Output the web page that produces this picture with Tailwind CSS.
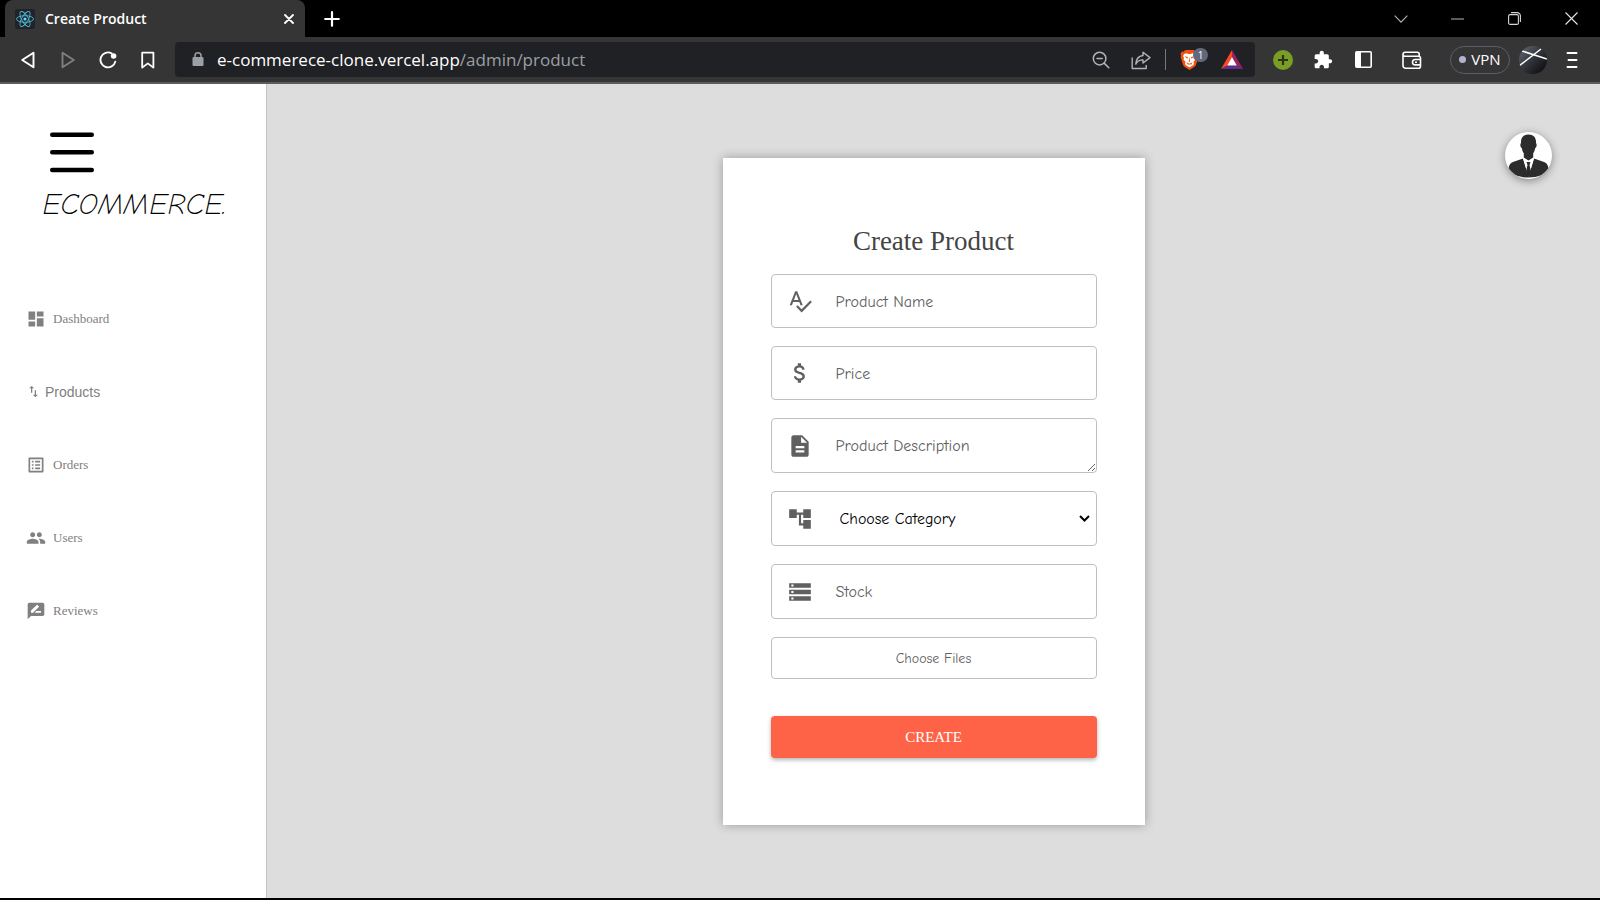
<!DOCTYPE html>
<html lang="en">
<head>
<meta charset="utf-8">
<meta name="viewport" content="width=device-width, initial-scale=1">
<title>Create Product</title>
<script src="https://cdn.jsdelivr.net/npm/@tailwindcss/browser@4"></script>
</head>
<body class="flex min-h-screen flex-col bg-black font-['Segoe_UI','Open_Sans',sans-serif]">

<!-- Browser window -->
<header>
  <div class="flex h-[37px] items-stretch bg-black text-white">
    <div class="ml-[5px] flex w-[300px] items-center rounded-t-lg bg-[#353535] pl-[10px] pr-2">
      <svg class="size-5 rounded-xs bg-[#20232a]" viewBox="0 0 20 20" fill="none" stroke="#4fb8d2" stroke-width="0.9" aria-hidden="true">
        <ellipse cx="10" cy="10" rx="8.5" ry="3.3"/>
        <ellipse cx="10" cy="10" rx="8.5" ry="3.3" transform="rotate(60 10 10)"/>
        <ellipse cx="10" cy="10" rx="8.5" ry="3.3" transform="rotate(120 10 10)"/>
        <circle cx="10" cy="10" r="1.6" fill="#61dafb" stroke="none"/>
      </svg>
      <span class="ml-[10px] flex-1 text-sm font-semibold">Create Product</span>
      <button type="button" class="flex size-4 items-center justify-center" aria-label="Close tab">
        <svg class="size-[10px]" viewBox="0 0 10 10" stroke="#fff" stroke-width="1.8" stroke-linecap="round"><path d="M1 1l8 8M9 1l-8 8"/></svg>
      </button>
    </div>
    <button type="button" class="ml-3 flex w-[30px] items-center justify-center" aria-label="New tab">
      <svg class="size-4" viewBox="0 0 16 16" stroke="#fff" stroke-width="2.2" stroke-linecap="round"><path d="M8 1.2v13.6M1.2 8h13.6"/></svg>
    </button>
    <div class="ml-auto flex">
      <button type="button" class="flex w-[57px] items-center justify-center" aria-label="Search tabs">
        <svg class="h-2 w-[14px]" viewBox="0 0 14 8" fill="none" stroke="#b5b5b5" stroke-width="1.1"><path d="M.7.7L7 7.2 13.3.7"/></svg>
      </button>
      <button type="button" class="flex w-[57px] items-center justify-center" aria-label="Minimize">
        <svg class="h-[2px] w-[13px]" viewBox="0 0 13 2" stroke="#b5b5b5"><path d="M0 1h13"/></svg>
      </button>
      <button type="button" class="flex w-[57px] items-center justify-center" aria-label="Restore">
        <svg class="size-[13px]" viewBox="0 0 13 13" fill="none" stroke="#d5d5d5" stroke-width="1.1"><rect x=".6" y="2.6" width="9.8" height="9.8" rx="1.5"/><path d="M3 .6h6.2a3.2 3.2 0 0 1 3.2 3.2V10"/></svg>
      </button>
      <button type="button" class="flex w-[57px] items-center justify-center" aria-label="Close window">
        <svg class="size-[13px]" viewBox="0 0 13 13" stroke="#e5e5e5" stroke-width="1.1"><path d="M.5.5l12 12M12.5.5l-12 12"/></svg>
      </button>
    </div>
  </div>

  <div class="flex h-[47px] items-center border-b-2 border-[#5c5c5c] bg-[#353535] pl-2 pr-[13px]">
    <button type="button" class="flex w-10 justify-center" aria-label="Back">
      <svg class="size-[18px]" viewBox="0 0 18 18" fill="none" stroke="#fff" stroke-width="1.9" stroke-linejoin="round"><path d="M14.5 1.8v14.4L3.2 9z"/></svg>
    </button>
    <button type="button" class="flex w-10 justify-center" aria-label="Forward">
      <svg class="size-[18px]" viewBox="0 0 18 18" fill="none" stroke="#7f7f7f" stroke-width="1.9" stroke-linejoin="round"><path d="M3.5 1.8v14.4L14.8 9z"/></svg>
    </button>
    <button type="button" class="flex w-10 justify-center" aria-label="Reload">
      <svg class="size-[18px]" viewBox="0 0 18 18" fill="none" stroke="#fff" stroke-width="1.9" stroke-linecap="round"><path d="M12.6 2.3A7.5 7.5 0 1 0 16.3 10.6"/><circle cx="14.6" cy="5" r="2.8" fill="#fff" stroke="none"/></svg>
    </button>
    <button type="button" class="flex w-10 justify-center" aria-label="Bookmark">
      <svg class="size-[18px]" viewBox="0 0 18 18" fill="none" stroke="#fff" stroke-width="1.8" stroke-linejoin="round"><path d="M3.2 1.6h11.2v15L8.8 12.4l-5.6 4.2z"/></svg>
    </button>

    <div class="ml-[7px] flex h-[35px] flex-1 items-center rounded bg-[#202124] pl-[17px] pr-3">
      <svg class="h-[15px] w-3" viewBox="0 0 12 15" aria-hidden="true"><rect x=".5" y="5" width="11" height="9" rx="1" fill="#9aa0a6"/><path d="M3 6V3.8a3 3 0 0 1 6 0V6" fill="none" stroke="#9aa0a6" stroke-width="1.5"/></svg>
      <a href="#" class="ml-[13px] flex-1 text-[17px] leading-6 text-white">e-commerece-clone.vercel.app<span class="text-[#9aa0a6]">/admin/product</span></a>
      <button type="button" class="flex w-5 justify-center" aria-label="Zoom out">
        <svg class="size-[18px]" viewBox="0 0 18 18" fill="none" stroke="#b0b3b8" stroke-width="1.5" stroke-linecap="round"><circle cx="7.6" cy="7.6" r="6.3"/><path d="M12.4 12.4l4.4 4.4M5 7.6h5.2"/></svg>
      </button>
      <button type="button" class="ml-5 flex w-5 justify-center" aria-label="Share">
        <svg class="size-5" viewBox="0 0 20 20" fill="none" stroke="#b0b3b8" stroke-width="1.4" stroke-linejoin="round"><path d="M1.2 7.5v11h14V15"/><path d="M12 2.2l7 5.4-7 5.4V9.9c-3.6-.2-5.8 1.4-7.2 4.2.2-4.8 2.6-8 7.2-8.6z"/></svg>
      </button>
      <span class="ml-[14px] h-[21px] w-px bg-[#77797d]"></span>
      <button type="button" class="relative ml-[14px] h-[24px] w-[28px]" aria-label="Brave Shields, 1 blocked">
        <svg class="h-[22px] w-[19px]" viewBox="0 0 19 24" preserveAspectRatio="none">
          <path d="M5.2 1h8.6l1.6 2 1.6-.2L18.6 5.2l-.6 2 .4 1.6-2.400 8.400c-.4 1.200-.9 1.800-1.800 2.500L9.500 23l-4.700-3.300C3.900 19 3.400 18.400 3 17.200L.6 8.800 1 7.200l-.6-2L2 2.800l1.600.2z" fill="#f2520f"/>
          <path d="M4 5.500l3-1 1 1h3l1-1 3 1 1 2.500-1 1.500.5 2-2 2.500.5 2.500-2 2-2.500 1.500L7 18.500l-2-2 .5-2.500-2-2.500.5-2L3 8z" fill="#fff"/>
          <path d="M4.500 8l3.500.8-.6 1.700zM14.500 8l-3.500.8.6 1.700zM9.500 8.500l.7 5.500H8.800zM6.500 14.500l3 1.600 3-1.600-1 2.500h-4z" fill="#f2520f"/>
        </svg>
        <span class="absolute right-0 top-0 flex h-[14px] w-[15px] items-center justify-center rounded-full bg-[#62677b] text-[10px] leading-none text-white">1</span>
      </button>
      <button type="button" class="ml-[13px]" aria-label="Rewards">
        <svg class="h-[20px] w-[22px]" viewBox="0 0 22 20"><path d="M11 0L0 19l6.500-3.600L11 7z" fill="#ff4724"/><path d="M11 0l11 19-6.500-3.600L11 7z" fill="#9e1f63"/><path d="M0 19h22l-6.500-3.600h-9z" fill="#662d91"/><path d="M11 7l4.800 8.500H6.200z" fill="#fff"/></svg>
      </button>
    </div>

    <button type="button" class="ml-2 flex w-10 justify-center" aria-label="Add">
      <svg class="size-5" viewBox="0 0 20 20"><circle cx="10" cy="10" r="10" fill="#7a9e25"/><path d="M10 5v10M5 10h10" stroke="#2c3510" stroke-width="2.2"/></svg>
    </button>
    <button type="button" class="flex w-10 justify-center" aria-label="Extensions">
      <svg class="size-5" viewBox="0 0 24 24" fill="#fff"><path d="M20.500 11H19V7c0-1.100-.9-2-2-2h-4V3.500C13 2.120 11.880 1 10.500 1S8 2.120 8 3.500V5H4c-1.100 0-1.990.9-1.990 2v3.800H3.500c1.490 0 2.700 1.210 2.700 2.700s-1.210 2.700-2.700 2.700H2V20c0 1.100.9 2 2 2h3.800v-1.500c0-1.490 1.210-2.700 2.700-2.700 1.490 0 2.700 1.210 2.700 2.700V22H17c1.100 0 2-.9 2-2v-4h1.500c1.380 0 2.500-1.120 2.500-2.500S21.880 11 20.500 11z"/></svg>
    </button>
    <button type="button" class="flex w-10 justify-center" aria-label="Sidebar">
      <svg class="size-[17px]" viewBox="0 0 17 17"><rect x=".8" y=".8" width="15.400" height="15.400" rx="1" fill="none" stroke="#fff" stroke-width="1.600"/><path d="M1 1h5v15H1z" fill="#fff"/></svg>
    </button>
    <button type="button" class="ml-[9px] flex w-10 justify-center" aria-label="Wallet">
      <svg class="size-5" viewBox="0 0 20 20" fill="none" stroke="#fff" stroke-width="1.600" stroke-linejoin="round"><path d="M17.200 6.500V4.300a2 2 0 0 0-2-2H3a2 2 0 0 0-2 2v11.400a2.500 2.500 0 0 0 2.500 2.500h13a2 2 0 0 0 2-2V8.300a2 2 0 0 0-2-2H3a2 2 0 0 1-2-2"/><path d="M18.500 9.500h-5.300a2.700 2.700 0 0 0 0 5.400h5.300M13 12.200h2"/></svg>
    </button>
    <button type="button" class="ml-[18px] flex h-7 w-[60px] items-center justify-center gap-[5px] rounded-full border border-[#5a5d6b] text-[15px] leading-none text-white"><span class="size-[7px] rounded-full bg-[#b3b3cc]"></span>VPN</button>
    <button type="button" class="ml-[9px]" aria-label="Profile">
      <svg class="size-7" viewBox="0 0 28 28">
        <defs>
          <linearGradient id="sky" x1="0" y1="0" x2="1" y2="1"><stop offset="0" stop-color="#6a6c78"/><stop offset=".5" stop-color="#303238"/><stop offset="1" stop-color="#050506"/></linearGradient>
          <clipPath id="disc"><circle cx="14" cy="14" r="14"/></clipPath>
        </defs>
        <g clip-path="url(#disc)"><path d="M0 0h28v28H0z" fill="url(#sky)"/><path d="M0 20L22 3M3 5l25 8" stroke="#fff" stroke-width="1.500"/></g>
      </svg>
    </button>
    <button type="button" class="ml-[10px] flex w-[30px] justify-center" aria-label="Menu">
      <svg class="h-[18px] w-3" viewBox="0 0 12 18" stroke="#fff" stroke-width="2" stroke-linecap="round"><path d="M1.500 2h9M2.500 9h8M1.500 16h9"/></svg>
    </button>
  </div>
</header>

<!-- Page -->
<div class="flex flex-1 bg-[#dddddd] font-['Liberation_Serif',serif]">
  <aside class="w-[267px] shrink-0 border-r border-[#c4c4c4] bg-white">
    <button type="button" class="ml-[50px] mt-12 block" aria-label="Toggle menu">
      <svg class="h-[42px] w-[44px]" viewBox="0 0 44 42" stroke="#000" stroke-width="4.400" stroke-linecap="round"><path d="M2.200 2.700h39.600M2.200 20.200h39.600M2.200 38h39.600"/></svg>
    </button>
    <a href="#" class="ml-[42px] mt-[11px] block whitespace-nowrap font-['Segoe_Script','Comic_Neue',cursive] text-[30px] font-light italic leading-[40px] text-black">ECOMMERCE.</a>
    <nav class="mt-[57px] flex flex-col pl-[26px] text-[13px] text-[#808080]">
      <a href="#" class="flex h-[73px] items-center gap-[7px]">
        <svg class="size-5" viewBox="0 0 24 24" fill="currentColor"><path d="M3 13h8V3H3v10zm0 8h8v-6H3v6zm10 0h8V11h-8v10zm0-18v6h8V3h-8z"/></svg>Dashboard</a>
      <a href="#" class="flex h-[73px] items-center gap-1 font-['Liberation_Sans',sans-serif] text-sm">
        <svg class="size-[15px]" viewBox="0 0 24 24" fill="currentColor"><path d="M9 3L5 6.990h3V14h2V6.990h3L9 3zm7 14.010V10h-2v7.010h-3L15 21l4-3.990h-3z"/></svg>Products</a>
      <a href="#" class="flex h-[73px] items-center gap-[7px]">
        <svg class="size-5" viewBox="0 0 24 24" fill="currentColor"><path d="M19 5v14H5V5h14m1.100-2H3.900c-.5 0-.9.4-.9.9v16.200c0 .4.4.9.9.9h16.200c.4 0 .9-.5.9-.9V3.900c0-.5-.5-.9-.9-.9zM11 7h6v2h-6V7zm0 4h6v2h-6v-2zm0 4h6v2h-6zM7 7h2v2H7zm0 4h2v2H7zm0 4h2v2H7z"/></svg>Orders</a>
      <a href="#" class="flex h-[73px] items-center gap-[7px]">
        <svg class="size-5" viewBox="0 0 24 24" fill="currentColor"><path d="M16 11c1.660 0 2.990-1.340 2.990-3S17.660 5 16 5c-1.660 0-3 1.340-3 3s1.340 3 3 3zm-8 0c1.660 0 2.990-1.340 2.990-3S9.660 5 8 5C6.340 5 5 6.340 5 8s1.340 3 3 3zm0 2c-2.330 0-7 1.170-7 3.500V19h14v-2.500c0-2.330-4.670-3.500-7-3.500zm8 0c-.29 0-.62.02-.97.05 1.160.84 1.970 1.970 1.970 3.450V19h6v-2.500c0-2.330-4.670-3.500-7-3.500z"/></svg>Users</a>
      <a href="#" class="flex h-[73px] items-center gap-[7px]">
        <svg class="size-5" viewBox="0 0 24 24" fill="currentColor"><path d="M20 2H4c-1.100 0-1.990.9-1.990 2L2 22l4-4h14c1.100 0 2-.9 2-2V4c0-1.100-.9-2-2-2zM6 14v-2.470l6.880-6.880c.2-.2.51-.2.71 0l1.770 1.770c.2.2.2.51 0 .71L8.470 14H6zm12 0h-7.500l2-2H18v2z"/></svg>Reviews</a>
    </nav>
  </aside>

  <main class="relative flex flex-1 items-start justify-center pt-[74px]">
    <form class="w-[422px] bg-white px-12 pb-[67px] pt-[63px] shadow-[0_0_10px_rgba(0,0,0,0.3)]">
      <h1 class="text-center text-[27px] leading-10 text-[#444]">Create Product</h1>
      <div class="mt-[13px] flex flex-col gap-[18px] font-['Comic_Sans_MS','Comic_Neue',cursive] text-base">
        <div class="flex h-[54px] items-center rounded border border-[#c0c0c0]">
          <label for="name" class="flex w-16 shrink-0 pl-[15px] text-[#606060]"><svg class="size-[26px]" viewBox="0 0 24 24" fill="currentColor"><path d="M12.450 16h2.090L9.430 3H7.570L2.460 16h2.090l1.120-3h5.640l1.140 3zm-6.020-5L8.500 5.480 10.570 11H6.430zm15.160.59l-8.090 8.090L9.830 16l-1.410 1.410 5.090 5.090L23 13l-1.410-1.410z"/></svg></label>
          <input id="name" type="text" placeholder="Product Name" aria-label="Product Name" class="h-full min-w-0 flex-1 pt-px outline-none placeholder:text-[#606060]">
        </div>
        <div class="flex h-[54px] items-center rounded border border-[#c0c0c0]">
          <label for="price" class="flex w-16 shrink-0 pl-[15px] text-[#606060]"><svg class="size-[26px]" viewBox="0 0 24 24" fill="currentColor"><path d="M11.800 10.900c-2.270-.59-3-1.200-3-2.150 0-1.090 1.010-1.850 2.700-1.850 1.780 0 2.440.85 2.500 2.100h2.210c-.07-1.720-1.120-3.300-3.210-3.810V3h-3v2.160c-1.940.42-3.500 1.680-3.500 3.610 0 2.310 1.910 3.460 4.700 4.130 2.500.6 3 1.480 3 2.410 0 .69-.49 1.790-2.700 1.790-2.060 0-2.870-.92-2.980-2.100h-2.200c.12 2.190 1.760 3.420 3.680 3.830V21h3v-2.150c1.950-.37 3.500-1.500 3.500-3.550 0-2.840-2.430-3.810-4.700-4.400z"/></svg></label>
          <input id="price" type="text" inputmode="decimal" placeholder="Price" aria-label="Price" class="h-full min-w-0 flex-1 pt-px outline-none placeholder:text-[#606060]">
        </div>
        <div class="flex h-[55px] items-center rounded border border-[#c0c0c0]">
          <label for="description" class="flex w-16 shrink-0 pl-[15px] text-[#606060]"><svg class="size-[26px]" viewBox="0 0 24 24" fill="currentColor"><path d="M14 2H6c-1.100 0-1.990.9-1.990 2L4 20c0 1.100.89 2 1.990 2H18c1.100 0 2-.9 2-2V8l-6-6zm2 16H8v-2h8v2zm0-4H8v-2h8v2zm-3-5V3.500L18.500 9H13z"/></svg></label>
          <textarea id="description" rows="1" placeholder="Product Description" aria-label="Product Description" class="h-full min-w-0 flex-1 resize py-[15px] leading-6 outline-none placeholder:text-[#606060]"></textarea>
        </div>
        <div class="relative flex h-[55px] items-center rounded border border-[#c0c0c0]">
          <label for="category" class="flex w-16 shrink-0 pl-[15px] text-[#606060]"><svg class="size-[26px]" viewBox="0 0 24 24" fill="currentColor"><path d="M22 11V3h-7v3H9V3H2v8h7V8h2v10h4v3h7v-8h-7v3h-2V8h2v3z"/></svg></label>
          <select id="category" aria-label="Category" class="h-full min-w-0 flex-1 appearance-none pl-1 text-black outline-none"><option>Choose Category</option></select>
          <svg class="pointer-events-none absolute right-[6px] h-[7px] w-[11px]" viewBox="0 0 11 7" fill="none" stroke="#000" stroke-width="2"><path d="M1 1l4.500 4.500L10 1"/></svg>
        </div>
        <div class="flex h-[55px] items-center rounded border border-[#c0c0c0]">
          <label for="stock" class="flex w-16 shrink-0 pl-[15px] text-[#606060]"><svg class="size-[26px]" viewBox="0 0 24 24" fill="currentColor"><path d="M2 20h20v-4H2v4zm2-3h2v2H4v-2zM2 4v4h20V4H2zm4 3H4V5h2v2zm-4 7h20v-4H2v4zm2-3h2v2H4v-2z"/></svg></label>
          <input id="stock" type="text" inputmode="numeric" placeholder="Stock" aria-label="Stock" class="h-full min-w-0 flex-1 pt-px outline-none placeholder:text-[#606060]">
        </div>
        <label class="flex h-[42px] cursor-pointer items-center justify-center rounded border border-[#c0c0c0] pt-px text-sm text-[#606060]">Choose Files<input type="file" multiple class="sr-only"></label>
      </div>
      <button type="submit" class="mt-[37px] flex h-[42px] w-full items-center justify-center rounded bg-[#ff6347] text-[15px] text-white shadow-[0_2px_4px_rgba(0,0,0,0.3)]">CREATE</button>
    </form>
    <button type="button" class="absolute right-12 top-12 size-[47px] overflow-hidden rounded-full bg-white shadow-[0_2px_8px_rgba(0,0,0,0.4)]" aria-label="Account">
      <svg class="size-full" viewBox="0 0 47 47">
        <path d="M23.500 2.500c5 0 7.800 3.200 7.500 8.200.2 1 .9 1.500.6 3-.2 1.200-.8 2-1.400 2.300-.3 2.300-1 4-2 5.300v4.200l-4.700 3-4.700-3v-4.200c-1-1.300-1.700-3-2-5.300-.6-.3-1.200-1.100-1.400-2.300-.3-1.500.4-2 .6-3-.3-5 2.500-8.200 7.500-8.200z" fill="#2c2c2c"/>
        <path d="M18 26.500L8 30c-3 1-4.500 4-4.500 7.500C7 42.500 14 45.500 23.500 45.500s16.500-3 20-8C43.500 34 42 31 39 30l-10-3.500-5.500 18z" fill="#2c2c2c"/>
        <path d="M18 26.500l5.500 18 5.500-18-5.500 4z" fill="#fff"/>
        <path d="M21.500 30h4l-1 3 1.800 7.500-2.800 4-2.800-4L22.500 33z" fill="#2c2c2c"/>
      </svg>
    </button>
  </main>
</div>
<footer class="h-[2px] bg-black"></footer>
</body>
</html>
